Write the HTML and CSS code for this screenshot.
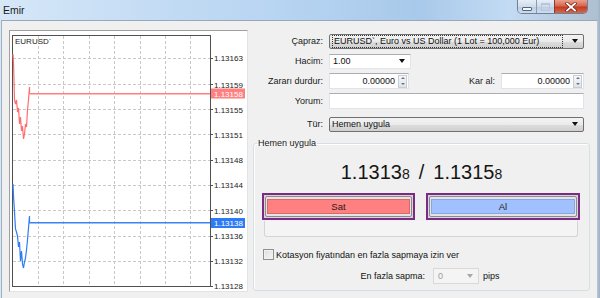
FILE: index.html
```html
<!DOCTYPE html>
<html lang="tr">
<head>
<meta charset="utf-8">
<title>Emir</title>
<link rel="stylesheet" href="styles.css">
</head>
<body>
<div class="window">
  <div class="titlebar">
    <span class="title">Emir</span>
    <div class="winbtns">
      <div class="wb wb-min"><span class="min-glyph"></span></div>
      <div class="wb wb-max"><span class="max-glyph"></span></div>
      <div class="wb wb-close">
        <svg width="12" height="10" viewBox="0 0 12 10"><path d="M2 1.5 L10 8.5 M10 1.5 L2 8.5" stroke="#7a2418" stroke-width="3.2" stroke-linecap="square"/><path d="M2 1.5 L10 8.5 M10 1.5 L2 8.5" stroke="#ffffff" stroke-width="1.8" stroke-linecap="square"/></svg>
      </div>
    </div>
  </div>
  <div class="client">
    <div class="chart">
      <svg class="chart-svg" width="237" height="260" viewBox="10 31 237 260">
        <g class="grid">
          <path d="M13 58.5H210M13 84.5H210M13 109.5H210M13 134.5H210M13 160.5H210M13 185.5H210M13 210.5H210M13 236.5H210M13 261.5H210"/>
          <path d="M38.5 36V286M63.5 36V286M89.5 36V286M114.5 36V286M140.5 36V286M165.5 36V286M190.5 36V286"/>
        </g>
        <rect x="12.5" y="35.5" width="198" height="251" fill="none" stroke="#505050"/>
        <path class="ticks" d="M211 58.5h2M211 84.5h2M211 109.5h2M211 134.5h2M211 160.5h2M211 185.5h2M211 210.5h2M211 236.5h2M211 261.5h2M211 286.5h2"/>
        <text class="sym" x="15" y="44">EURUSD`</text>
        <path class="line-ask" d="M13 54 L13.5 62 L14.5 100 L15.5 104 L16.5 100 L17.5 112 L18.5 108 L19.5 124 L20.5 117 L21.5 131 L22.5 126 L23.5 139 L24.5 134 L25.5 124 L26.5 127 L27.5 110 L28.5 100 L29.5 87 L29.5 93.5"/>
        <rect x="29" y="93" width="181" height="1.5" fill="#ff8080"/>
        <path class="line-bid" d="M13 184 L13.5 196 L14.5 212 L15.5 229 L16.5 232 L17.5 236 L18.5 247 L19.5 242 L20.5 261 L21.5 251 L22.5 264 L23.5 268 L24.5 262 L25.5 258 L26.5 250 L27.5 240 L28.5 228 L29.5 216 L29.5 222.5"/>
        <rect x="29" y="222" width="181" height="1.5" fill="#3a84f6"/>
        <g class="axis">
          <text x="214" y="61">1.13163</text>
          <text x="214" y="88">1.13159</text>
          <text x="214" y="113">1.13155</text>
          <text x="214" y="138">1.13151</text>
          <text x="214" y="163">1.13148</text>
          <text x="214" y="188">1.13144</text>
          <text x="214" y="214">1.13140</text>
          <text x="214" y="239">1.13136</text>
          <text x="214" y="264">1.13132</text>
          <text x="214" y="289">1.13128</text>
        </g>
        <rect x="211" y="88.5" width="34" height="10" fill="#ff8080"/>
        <text class="axis-hl" x="214" y="96.5">1.13158</text>
        <rect x="211" y="218" width="34" height="10" fill="#2d7bf4"/>
        <text class="axis-hl" x="214" y="226">1.13138</text>
      </svg>
    </div>
    <div class="panel">
      <div class="form">
        <div class="row">
          <span class="lbl">Çapraz:</span>
          <div class="combo combo-btn w-full"><span class="combo-text focus">EURUSD`, Euro vs US Dollar (1 Lot = 100,000 Eur)</span><span class="arrow"></span></div>
        </div>
        <div class="row">
          <span class="lbl">Hacim:</span>
          <div class="combo combo-edit w-hacim"><span class="combo-text">1.00</span><span class="arrow"></span></div>
        </div>
        <div class="row">
          <span class="lbl">Zararı durdur:</span>
          <div class="input w-sl"><span class="num">0.00000</span><span class="spin"><span class="up"></span><span class="dn"></span></span></div>
          <span class="lbl lbl-tp">Kar al:</span>
          <div class="input w-tp"><span class="num">0.00000</span><span class="spin"><span class="up"></span><span class="dn"></span></span></div>
        </div>
        <div class="row">
          <span class="lbl">Yorum:</span>
          <div class="input w-full"></div>
        </div>
        <div class="row row-type">
          <span class="lbl">Tür:</span>
          <div class="combo combo-btn w-full"><span class="combo-text">Hemen uygula</span><span class="arrow"></span></div>
        </div>
      </div>
      <fieldset class="group">
        <legend class="legend">Hemen uygula</legend>
        <div class="price"><span>1.1313</span><span class="pip">8</span><span class="slash">/</span><span>1.1315</span><span class="pip">8</span></div>
        <div class="buttons">
          <div class="btn-frame"><div class="btn"><div class="btn-fill sell">Sat</div></div></div>
          <div class="btn-frame"><div class="btn"><div class="btn-fill buy">Al</div></div></div>
        </div>
        <div class="status"></div>
        <div class="check-row"><span class="checkbox"></span><span>Kotasyon fiyatından en fazla sapmaya izin ver</span></div>
        <div class="dev-row">
          <span class="dev-lbl">En fazla sapma:</span>
          <div class="combo combo-disabled"><span class="combo-text">0</span><span class="arrow"></span></div>
          <span class="pips">pips</span>
        </div>
      </fieldset>
    </div>
  </div>
</div>
</body>
</html>
```

FILE: styles.css
```css
* { box-sizing: border-box; }
html, body { margin: 0; padding: 0; }
body {
  width: 600px;
  height: 298px;
  overflow: hidden;
  font-family: "Liberation Sans", Arial, sans-serif;
  font-size: 9px;
  color: #111;
}
.window {
  height: 298px;
  display: flex;
  flex-direction: column;
  background: linear-gradient(90deg, #d6e7f8 0%, #c4dcf4 25%, #b5d3f1 50%, #a9c9ea 70%, #c3dbf3 85%, #aebfd1 99.6%, #9fb1c5 100%);
}
.titlebar {
  height: 20px;
  flex-shrink: 0;
  display: flex;
  justify-content: space-between;
  align-items: flex-start;
}
.title {
  font-size: 10.5px;
  padding: 4px 0 0 3px;
  color: #1b1b1b;
}
.winbtns {
  display: flex;
  margin-right: 12px;
  border: 1px solid #6f809a;
  border-top: none;
  border-radius: 0 0 5px 5px;
  overflow: hidden;
  height: 14px;
}
.wb {
  height: 13px;
  display: flex;
  align-items: center;
  justify-content: center;
}
.wb-min {
  width: 19px;
  background: linear-gradient(#e6eef8, #cfdcec 50%, #bccde2 51%, #cdddef);
  border-right: 1px solid #8a9bb2;
}
.wb-max {
  width: 18px;
  background: linear-gradient(#e6eef8, #cfdcec 50%, #bccde2 51%, #cdddef);
  border-right: 1px solid #8a3a2e;
}
.wb-close {
  width: 32px;
  background: linear-gradient(#e8a08e, #d8664f 45%, #c23d22 55%, #d4694c);
}
.min-glyph {
  width: 10px;
  height: 4px;
  margin-top: 5px;
  background: #f4f7fb;
  border: 1px solid #56647a;
  border-radius: 1px;
}
.max-glyph {
  width: 9px;
  height: 8px;
  border: 1px solid #b8c6d8;
  border-top-width: 2px;
  background: transparent;
}
.client {
  flex: 1;
  display: flex;
  margin: 0 2px 0 1px;
  background: #f0f0f0;
  border-top: 1px solid #97a8ba;
  border-left: 1px solid #9fb0c2;
  border-right: 1px solid #b6c4d2;
}
.chart {
  margin: 9px 0 0 7px;
  width: 239px;
  height: 262px;
  background: #fff;
  border: 1px solid;
  border-color: #a0a0a0 #e3e3e3 #e3e3e3 #a0a0a0;
  flex-shrink: 0;
}
.chart-svg { display: block; }
.grid path { stroke: #c8c8c8; stroke-dasharray: 3 2; fill: none; }
.ticks { stroke: #505050; fill: none; }
.sym { font: 8px "Liberation Sans", Arial, sans-serif; fill: #222; }
.line-ask { fill: none; stroke: #ff6f6f; stroke-width: 1.2; }
.line-bid { fill: none; stroke: #2f7cf4; stroke-width: 1.2; }
.axis text { font: 8px "Liberation Sans", Arial, sans-serif; fill: #222; }
.axis-hl { font: 8px "Liberation Sans", Arial, sans-serif; fill: #fff; }

.panel {
  margin-left: 5px;
  width: 337px;
  padding-top: 12px;
  flex-shrink: 0;
}
.form {
  display: flex;
  flex-direction: column;
  gap: 4px;
}
.row {
  display: flex;
  align-items: center;
  height: 16px;
}
.row-type { margin-top: 3px; }
.lbl {
  width: 70px;
  text-align: right;
  margin-right: 6px;
  flex-shrink: 0;
  color: #1a1a1a;
}
.lbl-tp { width: 86px; }
.w-full { width: 255px; }
.w-hacim { width: 82px; }
.w-sl { width: 80px; }
.w-tp { width: 83px; }

.combo {
  height: 15px;
  display: flex;
  align-items: center;
  justify-content: space-between;
}
.combo-btn {
  border: 1px solid #707070;
  border-radius: 2px;
  background: linear-gradient(#f3f3f3, #ebebeb 50%, #dddddd 51%, #cfcfcf);
  padding: 0 5px 0 2px;
}
.combo-edit {
  border: 1px solid #e3e4e8;
  border-top-color: #abadb3;
  background: #fff;
  padding: 0 5px 0 3px;
}
.combo-text { white-space: nowrap; }
.focus {
  flex: 1;
  border: 1px dotted #333;
  padding: 0 1px;
  line-height: 11px;
  margin-right: 9px;
}
.arrow {
  width: 0;
  height: 0;
  border-left: 3.5px solid transparent;
  border-right: 3.5px solid transparent;
  border-top: 4px solid #111;
  flex-shrink: 0;
}
.input {
  height: 16px;
  background: #fff;
  border: 1px solid #e2e3ea;
  border-top-color: #abadb3;
  display: flex;
  align-items: center;
  justify-content: flex-end;
  padding-right: 1px;
}
.num { margin-right: 3px; }
.spin {
  width: 9px;
  height: 13px;
  display: flex;
  flex-direction: column;
  border: 1px solid #c9cdd3;
  background: linear-gradient(#f7f8fa, #dfe3e8);
}
.spin .up, .spin .dn {
  flex: 1;
  display: flex;
  align-items: center;
  justify-content: center;
}
.spin .up::before {
  content: "";
  border-left: 2px solid transparent;
  border-right: 2px solid transparent;
  border-bottom: 2px solid #6a7380;
}
.spin .dn::before {
  content: "";
  border-left: 2px solid transparent;
  border-right: 2px solid transparent;
  border-top: 2px solid #6a7380;
}

.group {
  margin: 6px 0 0 0;
  padding: 0;
  width: 337px;
  height: 153px;
  border: 1px solid #d5dfe5;
  border-radius: 3px;
  box-shadow: inset 1px 1px 0 #fff;
}
.legend {
  padding: 0 1px;
  margin-left: 3px;
  line-height: 11px;
  color: #1a1a1a;
}
.price {
  margin-top: 11px;
  text-align: center;
  font-size: 20px;
  line-height: 24px;
  color: #151515;
}
.price .pip { font-size: 14px; }
.price .slash { padding: 0 9px; }
.buttons {
  margin-top: 7px;
  display: flex;
  gap: 11px;
  padding-left: 8px;
}
.btn-frame {
  width: 153px;
  height: 27px;
  border: 2px solid #7b2a85;
  background: #d6d6d6;
  padding: 1px;
}
.btn-frame + .btn-frame { width: 154px; }
.btn {
  height: 100%;
  border: 1px solid #8c8c8c;
  border-radius: 2px;
  background: #e4e4e4;
  padding: 2px 1px;
}
.btn-fill {
  height: 100%;
  display: flex;
  align-items: center;
  justify-content: center;
  font-size: 9.5px;
  color: #2a1a1a;
}
.sell { background: #ff8080; border: 1px solid #d86a6a; }
.buy { background: #a0c0ff; border: 1px solid #86a7e4; }
.status {
  margin: 1px 0 0 10px;
  width: 314px;
  height: 16px;
  border: 1px solid #d4d4d4;
  border-top: none;
  border-radius: 0 0 3px 3px;
  background: #f4f4f4;
}
.check-row {
  margin: 12px 0 0 9px;
  display: flex;
  align-items: center;
  gap: 2px;
  height: 11px;
}
.checkbox {
  width: 11px;
  height: 11px;
  border: 1px solid #8e8f8f;
  background: linear-gradient(135deg, #dcdcdc, #f6f6f6);
  box-shadow: inset 0 0 0 1px #f0f0f0;
}
.dev-row {
  margin-top: 8px;
  display: flex;
  align-items: center;
  height: 16px;
}
.dev-lbl {
  width: 171px;
  text-align: right;
  margin-right: 8px;
}
.combo-disabled {
  width: 46px;
  height: 16px;
  border: 1px solid #d9d9d9;
  background: #f4f4f4;
  padding: 0 5px 0 4px;
  color: #9a9a9a;
}
.combo-disabled .arrow { border-top-color: #a8a8a8; }
.pips { margin-left: 4px; }
```
